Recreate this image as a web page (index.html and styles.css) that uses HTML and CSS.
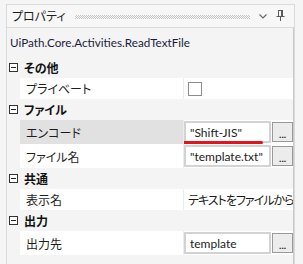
FILE: index.html
```html
<!DOCTYPE html>
<html lang="ja">
<head>
<meta charset="utf-8">
<link rel="stylesheet" href="styles.css">
</head>
<body>
<div class="panel">
  <div class="titlebar">
    <span class="title">プロパティ</span>
    <span class="grip"></span>
    <svg class="tb-icon" width="12" height="12" viewBox="0 0 12 12"><polyline points="2.5,4.5 6,8 9.5,4.5" fill="none" stroke="#6a6a6a" stroke-width="1.2"/></svg>
    <svg class="tb-icon pin" width="10" height="12" viewBox="0 0 10 12"><rect x="2.5" y="0.5" width="4" height="6" fill="none" stroke="#5a5a5a"/><line x1="5.5" y1="1" x2="5.5" y2="6.5" stroke="#5a5a5a"/><line x1="0.5" y1="6.5" x2="8.5" y2="6.5" stroke="#5a5a5a"/><line x1="4.5" y1="6.5" x2="4.5" y2="11" stroke="#5a5a5a"/></svg>
  </div>
  <div class="content">
    <div class="classname">UiPath.Core.Activities.ReadTextFile</div>
    <div class="grid">
      <div class="cat"><span class="minus"></span><span class="cat-label">その他</span></div>
      <div class="prop">
        <div class="name">プライベート</div>
        <div class="value"><span class="check"></span></div>
      </div>
      <div class="cat"><span class="minus"></span><span class="cat-label">ファイル</span></div>
      <div class="prop tall selected">
        <div class="name">エンコード</div>
        <div class="value"><span class="box">"Shift-JIS"</span><span class="btn">...</span><span class="redline"></span></div>
      </div>
      <div class="prop tall">
        <div class="name">ファイル名</div>
        <div class="value"><span class="box">"template.txt"</span><span class="btn">...</span></div>
      </div>
      <div class="cat"><span class="minus"></span><span class="cat-label">共通</span></div>
      <div class="prop">
        <div class="name">表示名</div>
        <div class="value"><span class="plain">テキストをファイルから読み込み</span></div>
      </div>
      <div class="cat"><span class="minus"></span><span class="cat-label">出力</span></div>
      <div class="prop tall">
        <div class="name">出力先</div>
        <div class="value"><span class="box">template</span><span class="btn">...</span></div>
      </div>
    </div>
  </div>
</div>
</body>
</html>
```

FILE: styles.css
```css
* { box-sizing: border-box; }
html, body { margin: 0; padding: 0; }
body {
  background: #f4f5f4;
  font-family: "Lato", "Noto Sans CJK JP", sans-serif;
  font-size: 12px;
  color: #1a1a1a;
  width: 303px;
  height: 264px;
  overflow: hidden;
  font-feature-settings: "palt";
}
.panel {
  margin: 4px 0 0 6px;
  width: 289px;
  height: 260px;
  border: 1px solid #d9dad9;
  border-bottom: none;
  display: flex;
  flex-direction: column;
}
.titlebar {
  height: 23px;
  border-bottom: 1px solid #d9dad9;
  background: #f6f7f6;
  display: flex;
  align-items: center;
  padding-left: 5px;
}
.title {
  font-family: "Noto Sans CJK JP", sans-serif;
  font-size: 12px;
  color: #1e1e1e;
  line-height: 22px;
}
.grip {
  flex: 1;
  height: 4px;
  margin: 1px 7px 0 9px;
  background: repeating-conic-gradient(#c4c4c4 0 25%, transparent 0 50%) 0 0 / 2px 2px;
}
.tb-icon { display: block; }
.pin { margin: 0 8px 0 7px; }
.content {
  flex: 1;
  border-right: 1px solid #c9c9c9;
  background: #f3f4f3;
}
.classname {
  height: 29px;
  line-height: 28px;
  padding-left: 3px;
  color: #1c1c40;
  font-size: 11.7px;
  white-space: nowrap;
}
.grid { display: flex; flex-direction: column; }
.cat {
  height: 21px;
  display: flex;
  align-items: center;
}
.minus {
  width: 9px;
  height: 9px;
  margin-left: 2px;
  border: 1px solid #333;
  position: relative;
  background: #fff;
}
.minus::after {
  content: "";
  position: absolute;
  left: 1px;
  top: 3px;
  width: 5px;
  height: 1px;
  background: #222;
}
.cat-label {
  margin-left: 6px;
  font-family: "Noto Sans CJK JP", sans-serif;
  font-weight: bold;
  font-size: 12px;
  color: #111;
}
.prop {
  height: 21px;
  margin-left: 13px;
  width: 273px;
  display: flex;
  background: #fff;
}
.prop.tall { height: 24px; }
.prop.selected .name { background: #e1e1e1; }
.name {
  width: 164px;
  border-right: 1px solid #ececec;
  padding-left: 6px;
  display: flex;
  align-items: center;
  font-family: "Noto Sans CJK JP", sans-serif;
  color: #1e1e1e;
}
.value {
  flex: 1;
  display: flex;
  align-items: center;
  position: relative;
  overflow: hidden;
  white-space: nowrap;
}
.check {
  width: 14px;
  height: 14px;
  margin-left: 4px;
  border: 1px solid #8c8c8c;
  background: #fff;
}
.plain {
  padding-left: 4px;
  font-family: "Noto Sans CJK JP", sans-serif;
  letter-spacing: -1px;
}
.box {
  width: 88px;
  height: 22px;
  border: 2px solid #d3d3d3;
  background: #fff;
  padding-left: 4px;
  display: flex;
  align-items: center;
  color: #222;
}
.btn {
  width: 21px;
  height: 20px;
  margin-left: 1px;
  border: 1px solid #9a9a9a;
  background: #ececec;
  font-size: 10px;
  line-height: 22px;
  text-align: center;
  color: #222;
  font-weight: bold;
}
.redline {
  position: absolute;
  left: -3px;
  top: 21px;
  width: 82px;
  height: 3px;
  border-radius: 2px;
  background: #e5131c;
}
```
